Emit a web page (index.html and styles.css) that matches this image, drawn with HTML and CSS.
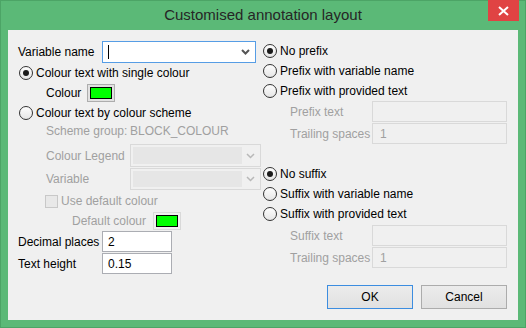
FILE: index.html
```html
<!DOCTYPE html>
<html lang="en">
<head>
    <meta charset="UTF-8">
    <title>Customised annotation layout</title>
    <link rel="stylesheet" href="styles.css">
</head>
<body>
    <div class="window">
        <div class="titlebar">
            <span class="title">Customised annotation layout</span>
            <span class="close">
                <svg width="11" height="10" viewBox="0 0 11 10"><path d="M1 1 L10 9 M10 1 L1 9" stroke="#fff" stroke-width="2"/></svg>
            </span>
        </div>
        <div class="client">
            <div class="columns">
                <div class="col left">
                    <div class="row h22">
                        <span class="label w84">Variable name</span>
                        <div class="combo focus">
                            <span class="caret"></span>
                            <svg class="arrow" width="9" height="6" viewBox="0 0 9 6"><path d="M1 1 L4.5 4.5 L8 1" fill="none" stroke="#555" stroke-width="2"/></svg>
                        </div>
                    </div>
                    <div class="row h20">
                        <span class="radio checked"></span>
                        <span class="label">Colour text with single colour</span>
                    </div>
                    <div class="row h20 indent">
                        <span class="label w41">Colour</span>
                        <span class="swatch"><span></span></span>
                    </div>
                    <div class="row h19">
                        <span class="radio"></span>
                        <span class="label">Colour text by colour scheme</span>
                    </div>
                    <div class="row h18 indent disabled">
                        <span class="label w84">Scheme group:</span>
                        <span class="label">BLOCK_COLOUR</span>
                    </div>
                    <div class="row h23 indent disabled mt4">
                        <span class="label w84">Colour Legend</span>
                        <div class="combo off">
                            <span class="field"></span>
                            <svg class="arrow" width="9" height="6" viewBox="0 0 9 6"><path d="M1 1 L4.5 4.5 L8 1" fill="none" stroke="#b8b8b8" stroke-width="1.5"/></svg>
                        </div>
                    </div>
                    <div class="row h22 indent disabled mt1">
                        <span class="label w84">Variable</span>
                        <div class="combo off">
                            <span class="field"></span>
                            <svg class="arrow" width="9" height="6" viewBox="0 0 9 6"><path d="M1 1 L4.5 4.5 L8 1" fill="none" stroke="#b8b8b8" stroke-width="1.5"/></svg>
                        </div>
                    </div>
                    <div class="row h20 indent disabled mt1">
                        <span class="check"></span>
                        <span class="label">Use default colour</span>
                    </div>
                    <div class="row h19 indent2 disabled">
                        <span class="label w81">Default colour</span>
                        <span class="swatch off"><span></span></span>
                    </div>
                    <div class="row h21 mt1">
                        <span class="label w84">Decimal places</span>
                        <span class="input short">2</span>
                    </div>
                    <div class="row h21 mt1">
                        <span class="label w84">Text height</span>
                        <span class="input short">0.15</span>
                    </div>
                </div>
                <div class="col right">
                    <div class="row h20">
                        <span class="radio checked"></span>
                        <span class="label">No prefix</span>
                    </div>
                    <div class="row h20">
                        <span class="radio"></span>
                        <span class="label">Prefix with variable name</span>
                    </div>
                    <div class="row h20">
                        <span class="radio"></span>
                        <span class="label">Prefix with provided text</span>
                    </div>
                    <div class="row h21 sub disabled">
                        <span class="label w82">Prefix text</span>
                        <span class="input off"></span>
                    </div>
                    <div class="row h21 sub disabled mt1">
                        <span class="label w82">Trailing spaces</span>
                        <span class="input off">1</span>
                    </div>
                    <div class="row h20 mt20">
                        <span class="radio checked"></span>
                        <span class="label">No suffix</span>
                    </div>
                    <div class="row h20">
                        <span class="radio"></span>
                        <span class="label">Suffix with variable name</span>
                    </div>
                    <div class="row h20">
                        <span class="radio"></span>
                        <span class="label">Suffix with provided text</span>
                    </div>
                    <div class="row h21 sub disabled mt1">
                        <span class="label w82">Suffix text</span>
                        <span class="input off"></span>
                    </div>
                    <div class="row h21 sub disabled mt1">
                        <span class="label w82">Trailing spaces</span>
                        <span class="input off">1</span>
                    </div>
                </div>
            </div>
            <div class="buttons">
                <span class="button default">OK</span>
                <span class="button">Cancel</span>
            </div>
        </div>
    </div>
</body>
</html>
```

FILE: styles.css
```css
* {
    box-sizing: border-box;
    margin: 0;
    padding: 0;
}

body {
    width: 526px;
    height: 328px;
    overflow: hidden;
    font-family: 'Liberation Sans', Arial, sans-serif;
    font-size: 12px;
    color: #000;
}

.window {
    width: 526px;
    height: 328px;
    background: #5bb977;
    border: 1px solid #4ca466;
    padding: 0 7px 7px 7px;
    display: flex;
    flex-direction: column;
}

.titlebar {
    height: 29px;
    position: relative;
    display: flex;
    justify-content: center;
    align-items: center;
}

.title {
    font-size: 15px;
    color: #262626;
    padding-bottom: 2px;
}

.close {
    position: absolute;
    top: -1px;
    right: -1px;
    width: 31px;
    height: 21px;
    background: #e04343;
    display: flex;
    align-items: center;
    justify-content: center;
}

.client {
    flex: 1;
    background: #f0f0f0;
    padding: 11px 11px 0 10px;
    display: flex;
    flex-direction: column;
}

.columns {
    display: flex;
}

.col {
    display: flex;
    flex-direction: column;
}

.left {
    width: 244px;
}

.right {
    width: 245px;
}

.row {
    display: flex;
    align-items: center;
    white-space: nowrap;
}

.h18 { height: 18px; }
.h19 { height: 19px; }
.h20 { height: 20px; }
.h21 { height: 21px; }
.h22 { height: 22px; }
.h23 { height: 23px; }
.mt1 { margin-top: 1px; }
.mt4 { margin-top: 4px; }
.mt20 { margin-top: 20px; }

.indent { padding-left: 28px; }
.indent2 { padding-left: 54px; }
.sub { padding-left: 28px; }

.w41 { width: 41px; }
.w81 { width: 81px; }
.w82 { width: 82px; }
.w84 { width: 84px; }

.disabled .label,
.disabled .input {
    color: #a0a0a0;
}

.radio {
    width: 14px;
    height: 14px;
    border: 1px solid #333;
    border-radius: 50%;
    background: linear-gradient(#fdfdfd, #e6e6e6);
    margin: 0 3px 0 1px;
    display: flex;
    align-items: center;
    justify-content: center;
}

.radio.checked::after {
    content: '';
    width: 6px;
    height: 6px;
    border-radius: 50%;
    background: #1a1a1a;
}

.check {
    width: 13px;
    height: 13px;
    border: 1px solid #c8c8c8;
    background: #e8e8e8;
    margin: 0 3px 0 -1px;
}

.combo {
    width: 154px;
    height: 22px;
    border: 1px solid #abadb3;
    background: #fff;
    display: flex;
    align-items: center;
    padding: 0 5px 0 5px;
}

.combo.focus {
    border-color: #569de5;
}

.combo .caret {
    width: 1px;
    height: 14px;
    background: #000;
}

.combo .arrow {
    margin-left: auto;
}

.combo.off {
    width: 131px;
    height: 100%;
    border-color: #d9d9d9;
    background: #f0f0f0;
    padding: 2px 5px 2px 2px;
}

.combo.off .field {
    width: 109px;
    height: 100%;
    background: #e6e6e6;
}

.swatch {
    width: 28px;
    height: 18px;
    border: 1px solid #adadad;
    background: #e1e1e1;
    padding: 2px;
    display: flex;
}

.swatch span {
    flex: 1;
    background: #00ff00;
    border: 1px solid #000;
}

.swatch.off {
    border-color: #d9d9d9;
    background: #f0f0f0;
}

.input {
    height: 100%;
    border: 1px solid #abadb3;
    background: #fff;
    display: flex;
    align-items: center;
    padding-left: 5px;
}

.input.short {
    width: 70px;
}

.input.off {
    width: 135px;
    border-color: #d9d9d9;
    background: #f0f0f0;
    padding-left: 7px;
}

.buttons {
    margin-top: auto;
    margin-bottom: 11px;
    display: flex;
    justify-content: flex-end;
    gap: 8px;
}

.button {
    width: 86px;
    height: 24px;
    border: 1px solid #acacac;
    background: linear-gradient(#ececec, #e1e1e1);
    display: flex;
    align-items: center;
    justify-content: center;
}

.button.default {
    border-color: #3c8de0;
}
```
